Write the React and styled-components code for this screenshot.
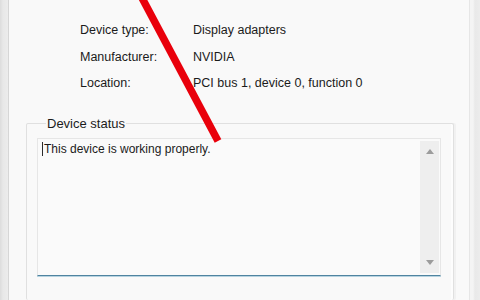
import React from "react";
import styled, { createGlobalStyle } from "styled-components";

const Global = createGlobalStyle`
  html, body { margin: 0; padding: 0; background: #f9f9f9; }
  body { font-family: "Liberation Sans", Arial, sans-serif; color: #1b1b1b; }
`;

const Window = styled.div`
  position: relative;
  width: 480px;
  height: 300px;
  overflow: hidden;
  display: flex;
  background: #f9f9f9;
`;

const LeftEdge = styled.div`
  width: 8px;
  flex: none;
  background: linear-gradient(90deg, #dcdcdc 0, #e8e8e8 3px, #ececec 100%);
  border-right: 1px solid #d6d6d6;
`;

const RightEdge = styled.div`
  width: 10px;
  flex: none;
  background: linear-gradient(90deg, #f4f4f4 0, #f4f4f4 3px, #e9e9e9 5px, #ececec 100%);
  border-left: 1px solid #e6e6e6;
  margin-left: 2px;
`;

const Content = styled.div`
  flex: 1;
  min-width: 0;
  display: flex;
  flex-direction: column;
  padding: 17px 13px 0 17px;
`;

const PropList = styled.dl`
  margin: 0 0 0 54px;
  display: grid;
  grid-template-columns: 113px auto;
  grid-auto-rows: 26.5px;
  align-items: center;
  font-size: 12.5px;
`;

const Term = styled.dt`
  margin: 0;
`;

const Value = styled.dd`
  margin: 0;
`;

const GroupBox = styled.fieldset`
  margin: 19px 0 0 0;
  padding: 6px 12px 0 10px;
  border: 1px solid #e0e0e0;
  border-bottom: none;
  border-radius: 2px;
  box-shadow: inset -2px 0 0 #fdfdfd, 2px 0 0 #f1f1f1;
  flex: 1;
  min-width: 0;
`;

const Legend = styled.legend`
  padding: 0 1px;
  margin-left: 9px;
  font-size: 13px;
  line-height: 16px;
  color: #1c1c1c;
`;

const StatusBox = styled.div`
  display: flex;
  height: 136px;
  background: #fafafa;
  border: 1px solid #e6e6e6;
  border-bottom: 1px solid #4f84a0;
  box-shadow: 0 1px 0 #b7d3e0;
`;

const StatusText = styled.div`
  flex: 1;
  padding: 2px 0 0 4px;
  font-size: 12px;
  line-height: 16px;
  color: #1b1b1b;
  display: flex;
  align-items: flex-start;
`;

const Caret = styled.span`
  width: 1px;
  height: 14px;
  margin-top: 1px;
  margin-right: 1px;
  background: #2a2a2a;
  flex: none;
`;

const ScrollBar = styled.div`
  width: 19px;
  flex: none;
  margin: 2px 1px 2px 0;
  background: #eeeeee;
  display: flex;
  flex-direction: column;
  justify-content: space-between;
  align-items: center;
  padding: 8px 0 8px;
`;

const Arrow = styled.svg`
  width: 8px;
  height: 5px;
  fill: #9c9c9c;
`;

const RedMark = styled.svg`
  position: absolute;
  left: 0;
  top: 0;
  pointer-events: none;
`;

export default function App() {
  return (
    <>
      <Global />
      <Window>
        <LeftEdge />
        <Content>
          <PropList>
            <Term>Device type:</Term>
            <Value>Display adapters</Value>
            <Term>Manufacturer:</Term>
            <Value>NVIDIA</Value>
            <Term>Location:</Term>
            <Value>PCI bus 1, device 0, function 0</Value>
          </PropList>
          <GroupBox>
            <Legend>Device status</Legend>
            <StatusBox>
              <StatusText>
                <Caret />
                This device is working properly.
              </StatusText>
              <ScrollBar>
                <Arrow viewBox="0 0 8 5"><path d="M4 0 L8 5 L0 5 Z" /></Arrow>
                <Arrow viewBox="0 0 8 5"><path d="M0 0 L8 0 L4 5 Z" /></Arrow>
              </ScrollBar>
            </StatusBox>
          </GroupBox>
        </Content>
        <RightEdge />
        <RedMark width="480" height="300" viewBox="0 0 480 300">
          <line x1="141" y1="-4" x2="218" y2="141" stroke="#e9000b" strokeWidth="7.5" />
        </RedMark>
      </Window>
    </>
  );
}
